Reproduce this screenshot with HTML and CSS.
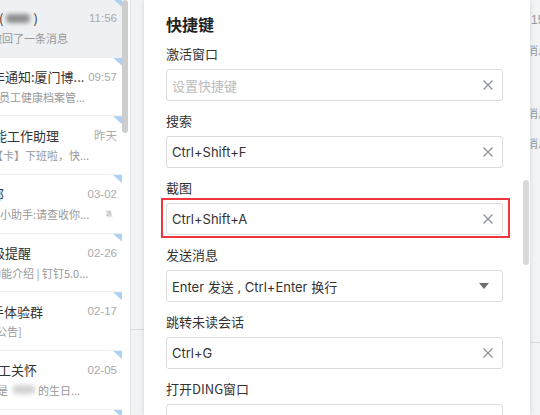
FILE: index.html
```html
<!DOCTYPE html>
<html lang="zh-CN">
<head>
<meta charset="utf-8">
<title>快捷键</title>
<link rel="stylesheet" href="styles.css">
</head>
<body>
<div class="app">
  <aside class="chatlist">
    <div class="rows">
      <div class="row row-active">
        <div class="line1"><span class="title t1">(<span class="blur blur-dark"></span>)</span><span class="time">11:56</span></div>
        <div class="line2"><span class="sub s1">撤回了一条消息</span></div>
        <i class="corner"></i>
      </div>
      <div class="row">
        <div class="line1"><span class="title t2">年通知:厦门博...</span><span class="time">09:57</span></div>
        <div class="line2"><span class="sub s2">员工健康档案管...</span></div>
        <i class="corner"></i>
      </div>
      <div class="row">
        <div class="line1"><span class="title t3">能工作助理</span><span class="time">昨天</span></div>
        <div class="line2"><span class="sub s3">【卡】下班啦，快...</span></div>
        <i class="corner"></i>
      </div>
      <div class="row">
        <div class="line1"><span class="title t4">部</span><span class="time">03-02</span></div>
        <div class="line2"><span class="sub s4">小助手:请查收你...</span>
          <svg class="mute" width="8" height="8" viewBox="0 0 8 8"><path d="M4 0.6c-1.5 0-2.4 1.1-2.4 2.5v2.1L0.8 6.3h6.4L6.4 5.2V3.1C6.4 1.7 5.5 0.6 4 0.6z" fill="#c8c8c8"/><path d="M3.1 6.8h1.8v0.8H3.1z" fill="#c8c8c8"/><path d="M0.6 0.8l6.8 6.6" stroke="#fff" stroke-width="1.2"/><path d="M0.6 0.4l6.8 6.6" stroke="#b8b8b8" stroke-width="0.8"/></svg>
        </div>
        <i class="corner"></i>
      </div>
      <div class="row">
        <div class="line1"><span class="title t5">级提醒</span><span class="time">02-26</span></div>
        <div class="line2"><span class="sub s5">功能介绍 | 钉钉5.0...</span></div>
        <i class="corner"></i>
      </div>
      <div class="row">
        <div class="line1"><span class="title t6">手体验群</span><span class="time">02-17</span></div>
        <div class="line2"><span class="sub s6">公告]</span></div>
        <i class="corner"></i>
      </div>
      <div class="row">
        <div class="line1"><span class="title t7">工关怀</span><span class="time">02-05</span></div>
        <div class="line2"><span class="sub s7">是<span class="blur blur-light"></span>的生日...</span></div>
        <i class="corner"></i>
      </div>
      <div class="row">
        <div class="line1"><span class="title">钉钉</span><span class="time">01-28</span></div>
        <div class="line2"><span class="sub">消息</span></div>
        <i class="corner"></i>
      </div>
    </div>
    <div class="list-scroll"></div>
  </aside>

  <div class="band band-left"><div class="band-top"></div></div>

  <section class="modal">
    <h2 class="modal-title">快捷键</h2>

    <div class="field">
      <div class="label">激活窗口</div>
      <div class="input"><span class="placeholder">设置快捷键</span>
        <svg class="clear" width="10" height="10" viewBox="0 0 10 10"><path d="M0.5 0.5L9.5 9.5M9.5 0.5L0.5 9.5" stroke="#8a8f98" stroke-width="1.2" fill="none"/></svg>
      </div>
    </div>

    <div class="field">
      <div class="label">搜索</div>
      <div class="input"><span>Ctrl+Shift+F</span>
        <svg class="clear" width="10" height="10" viewBox="0 0 10 10"><path d="M0.5 0.5L9.5 9.5M9.5 0.5L0.5 9.5" stroke="#8a8f98" stroke-width="1.2" fill="none"/></svg>
      </div>
    </div>

    <div class="field">
      <div class="label">截图</div>
      <div class="input highlight"><span>Ctrl+Shift+A</span>
        <svg class="clear" width="10" height="10" viewBox="0 0 10 10"><path d="M0.5 0.5L9.5 9.5M9.5 0.5L0.5 9.5" stroke="#8a8f98" stroke-width="1.2" fill="none"/></svg>
      </div>
    </div>

    <div class="field">
      <div class="label">发送消息</div>
      <div class="input select"><span>Enter 发送 , Ctrl+Enter 换行</span><i class="caret"></i></div>
    </div>

    <div class="field">
      <div class="label">跳转未读会话</div>
      <div class="input"><span>Ctrl+G</span>
        <svg class="clear" width="10" height="10" viewBox="0 0 10 10"><path d="M0.5 0.5L9.5 9.5M9.5 0.5L0.5 9.5" stroke="#8a8f98" stroke-width="1.2" fill="none"/></svg>
      </div>
    </div>

    <div class="field">
      <div class="label">打开DING窗口</div>
      <div class="input"><span>Ctrl+Alt+D</span>
        <svg class="clear" width="10" height="10" viewBox="0 0 10 10"><path d="M0.5 0.5L9.5 9.5M9.5 0.5L0.5 9.5" stroke="#8a8f98" stroke-width="1.2" fill="none"/></svg>
      </div>
    </div>

    <div class="modal-scroll"></div>
  </section>

  <div class="band band-right">
    <div class="band-top">
      <div class="rb-time">15</div>
      <div class="rb-msg rb-1">消息</div>
      <div class="rb-msg rb-2">消息</div>
      <div class="rb-msg rb-3">消息</div>
    </div>
  </div>
</div>
</body>
</html>
```

FILE: styles.css
```css
html, body {
  margin: 0;
  padding: 0;
}

body {
  width: 540px;
  height: 415px;
  overflow: hidden;
  background: #fff;
  font-family: "Noto Sans CJK SC", "Noto Sans", sans-serif;
}

.app {
  display: flex;
  height: 415px;
}

/* ---------- chat list ---------- */
.chatlist {
  flex: none;
  width: 130px;
  border-right: 1px solid #e4e4e6;
  position: relative;
  overflow: hidden;
  background: #fff;
}

.rows {
  width: 122px;
  margin-top: -1px;
}

.row {
  position: relative;
  height: 58.67px;
  box-sizing: border-box;
  border-bottom: 1px solid #efefef;
  padding: 10px 5px 0 0;
  overflow: hidden;
}

.row-active {
  background: #eef0f3;
}

.line1,
.line2 {
  display: flex;
  justify-content: space-between;
  align-items: center;
  height: 18px;
}

.line2 {
  margin-top: 2px;
}

.title {
  font-size: 13px;
  color: #333;
  white-space: nowrap;
  display: flex;
  align-items: center;
}

.time {
  font-family: "Liberation Sans", "Noto Sans CJK SC", sans-serif;
  font-size: 11.5px;
  color: #aaa;
  white-space: nowrap;
}

.sub {
  font-size: 11px;
  color: #999;
  white-space: nowrap;
  display: flex;
  align-items: center;
}

.t1 { margin-left: -1px; }
.t2 { margin-left: -8px; }
.t3 { margin-left: -6px; }
.t4 { margin-left: -9px; }
.t5 { margin-left: -8px; }
.t6 { margin-left: -9px; }
.t7 { margin-left: -2px; }

.s1 { margin-left: -9px; }
.s2 { margin-left: -1px; }
.s3 { margin-left: -8px; }
.s4 { margin-left: 0; }
.s5 { margin-left: -10px; }
.s6 { margin-left: -4px; }
.s7 { margin-left: -3px; }

.blur {
  display: inline-block;
  border-radius: 4px;
  filter: blur(2px);
}

.blur-dark {
  width: 24px;
  height: 9px;
  margin: 0 3px;
  background: #8e8e8e;
}

.blur-light {
  width: 22px;
  height: 9px;
  margin: 0 3px 0 5px;
  background: #d2d2d2;
}

.mute {
  margin-right: 4px;
}

.corner {
  position: absolute;
  top: 0;
  right: 0;
  width: 9px;
  height: 8px;
  background: #aed0f4;
  clip-path: polygon(0 0, 100% 0, 100% 100%);
}

.list-scroll {
  position: absolute;
  left: 122px;
  top: 0;
  width: 6px;
  height: 133px;
  background: #cdcdcd;
  border-radius: 3px;
}

/* ---------- side bands ---------- */
.band {
  flex: none;
  background: #f2f3f5;
  overflow: hidden;
}

.band-left {
  width: 13px;
}

.band-right {
  width: 10px;
}

.band-top {
  height: 330px;
  box-sizing: border-box;
  border-bottom: 1px solid #dcdcdc;
}

.rb-time {
  font-family: "Liberation Sans", sans-serif;
  font-size: 12px;
  line-height: 14px;
  color: #999;
  margin-top: 13px;
  padding-left: 1px;
  white-space: nowrap;
}

.rb-msg {
  font-size: 11px;
  line-height: 14px;
  color: #999;
  white-space: nowrap;
  margin-left: -3px;
}

.rb-1 { margin-top: 16px; }
.rb-2 { margin-top: 49px; }
.rb-3 { margin-top: 16px; }

/* ---------- modal ---------- */
.modal {
  flex: none;
  position: relative;
  z-index: 1;
  width: 386px;
  box-sizing: border-box;
  padding: 12px 0 0 22px;
  background: #fff;
  box-shadow: 0 0 5px rgba(0, 0, 0, 0.13);
}

.modal-title {
  margin: 0 0 9px;
  font-size: 16px;
  font-weight: 700;
  line-height: 24px;
  color: #222;
}

.field {
  width: 337px;
  margin-bottom: 11px;
}

.label {
  font-size: 13px;
  line-height: 18px;
  color: #333;
  margin-bottom: 6px;
  white-space: nowrap;
}

.input {
  position: relative;
  height: 32px;
  box-sizing: border-box;
  border: 1px solid #dcdcdc;
  border-radius: 3px;
  display: flex;
  align-items: center;
  justify-content: space-between;
  padding: 0 9px 0 5px;
  font-family: Inter, "Noto Sans CJK SC", sans-serif;
  font-size: 13px;
  color: #333;
  white-space: nowrap;
}

.placeholder {
  color: #bbb;
  font-family: "Noto Sans CJK SC", sans-serif;
}

.clear {
  flex: none;
  display: block;
}

.select {
  padding-right: 13px;
}

.caret {
  width: 0;
  height: 0;
  border-left: 5px solid transparent;
  border-right: 5px solid transparent;
  border-top: 6px solid #6e6e6e;
}

.highlight::after {
  content: "";
  position: absolute;
  left: -6px;
  top: -6px;
  right: -8px;
  bottom: -4px;
  border: 2px solid #f0383c;
  pointer-events: none;
}

.modal-scroll {
  position: absolute;
  left: 379px;
  top: 180px;
  width: 6px;
  height: 85px;
  background: #d9d9d9;
  border-radius: 3px;
}
```
